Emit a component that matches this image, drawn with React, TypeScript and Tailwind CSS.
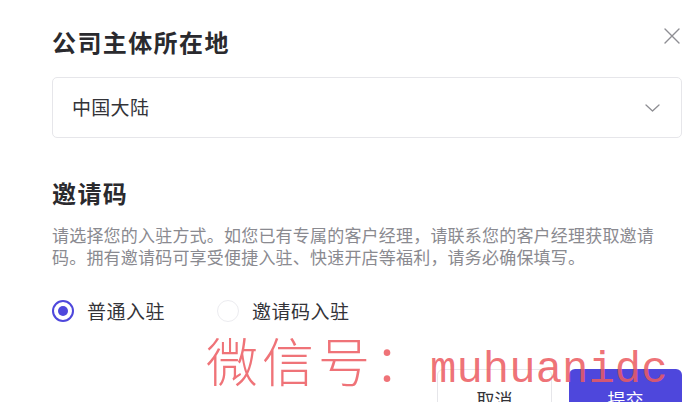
import React from "react";

const CloseIcon = () => (
  <svg width="16" height="16" viewBox="0 0 16 16" fill="none" stroke="#8e8e93" strokeWidth="1.4" strokeLinecap="round">
    <path d="M1 1L15 15M15 1L1 15" />
  </svg>
);

const ChevronDown = () => (
  <svg width="15" height="8" viewBox="0 0 15 8" fill="none" stroke="#8e8e93" strokeWidth="1.3" strokeLinecap="round" strokeLinejoin="round">
    <path d="M1 1L7.5 7L14 1" />
  </svg>
);

const Radio = ({ checked, label }: { checked?: boolean; label: string }) => (
  <label className="flex items-center gap-[13px]">
    <span
      className={
        checked
          ? "w-[22px] h-[22px] rounded-full border-2 border-[#4e47dc] flex items-center justify-center"
          : "w-[22px] h-[22px] rounded-full border border-[#ececf0]"
      }
    >
      {checked && <span className="w-[10px] h-[10px] rounded-full bg-[#4e47dc]" />}
    </span>
    <span className="text-[19px] tracking-[0.5px] text-[#333338] leading-6">{label}</span>
  </label>
);

export default function App() {
  return (
    <div className="relative w-[683px] h-[402px] overflow-hidden bg-white font-['Noto_Sans_CJK_SC','Noto_Sans',sans-serif]">
      <div className="pl-[52px] pr-px pt-[26px]">
        {/* ─── TITLE ─── */}
        <div className="flex items-center justify-between h-8">
          <h1 className="text-[24px] tracking-[1.4px] font-semibold text-[#2a2a2e] leading-8">公司主体所在地</h1>
          <span className="mr-[2px] -mt-[12px]">
            <CloseIcon />
          </span>
        </div>

        {/* ─── SELECT ─── */}
        <div className="mt-[19px] h-[61px] border border-[#e6e6ea] rounded-[5px] flex items-center justify-between pl-[19px] pr-[21px]">
          <span className="text-[19px] tracking-[0.3px] text-[#333338]">中国大陆</span>
          <ChevronDown />
        </div>

        {/* ─── INVITE CODE ─── */}
        <h2 className="mt-[39px] text-[24px] tracking-[1.4px] font-semibold text-[#2a2a2e] leading-8">邀请码</h2>
        <p className="mt-[15px] max-w-[612px] text-[17px] tracking-[0.2px] leading-[22px] text-[#8a8a90]">
          请选择您的入驻方式。如您已有专属的客户经理，请联系您的客户经理获取邀请码。拥有邀请码可享受便捷入驻、快速开店等福利，请务必确保填写。
        </p>

        <div className="mt-[31px] flex items-center gap-[52px]">
          <Radio checked label="普通入驻" />
          <Radio label="邀请码入驻" />
        </div>

        {/* ─── FOOTER ─── */}
        <div className="mt-[46px] flex justify-end gap-[17px]">
          <button className="w-[115px] h-[60px] rounded-[6px] border border-[#e6e6ea] bg-white text-[18px] text-[#333338]">
            取消
          </button>
          <button className="w-[113px] h-[60px] rounded-[6px] bg-[#4e47dc] text-[18px] text-white">
            提交
          </button>
        </div>
      </div>

      {/* ─── WATERMARK ─── */}
      <div className="absolute left-[206px] top-[334px] flex items-baseline text-[#ec5a60]/85 pointer-events-none">
        <span className="text-[52px] leading-none font-light tracking-[4px] font-['Noto_Sans_CJK_SC',serif]">微信号：</span>
        <span className="text-[44px] leading-none font-['Liberation_Mono',monospace]">muhuanidc</span>
      </div>
    </div>
  );
}
